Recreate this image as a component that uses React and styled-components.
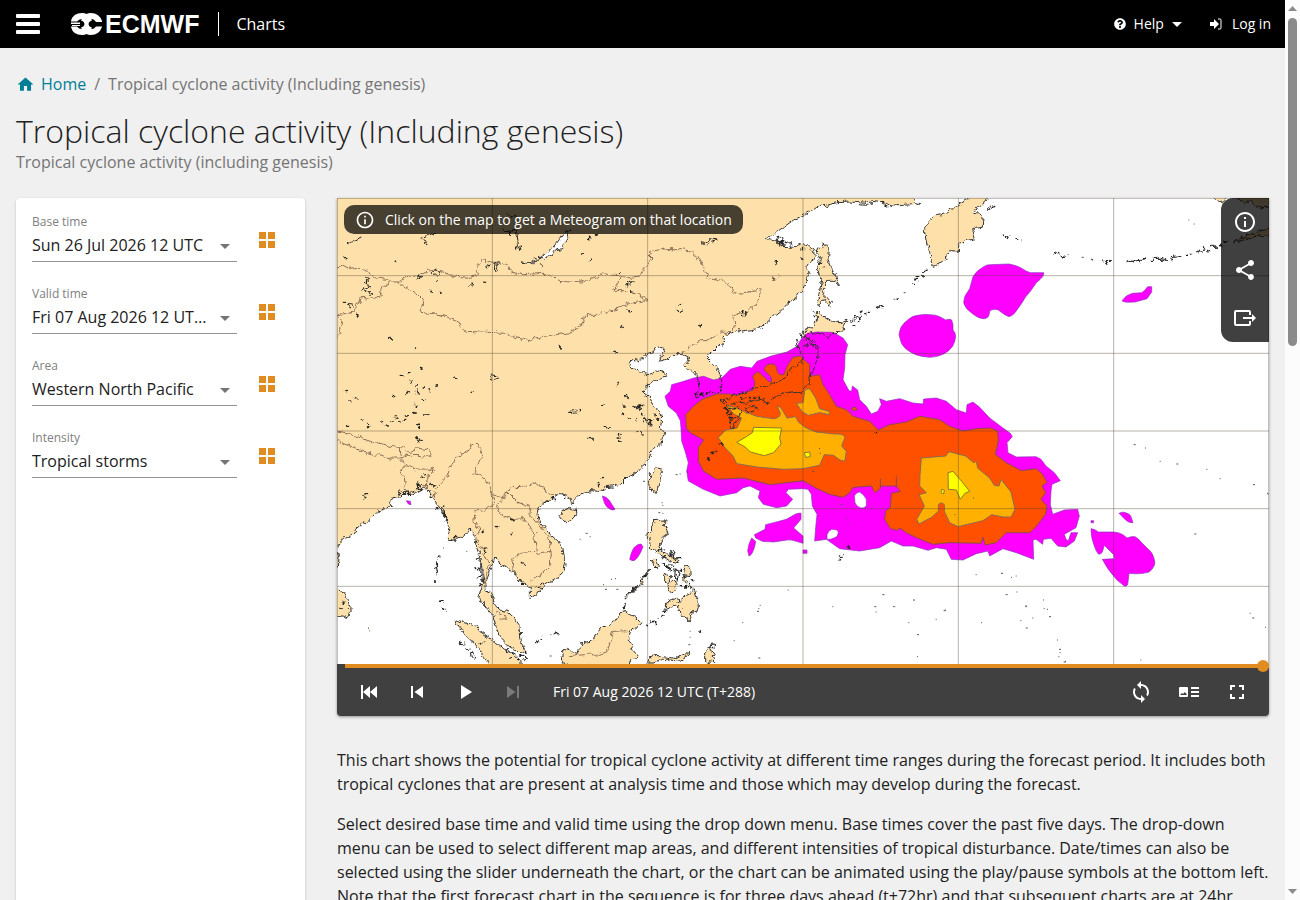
import React from "react";
import styled, { createGlobalStyle } from "styled-components";
import {
    MdHome,
    MdOutlineInfo,
    MdShare,
    MdSkipPrevious,
    MdSkipNext,
    MdPlayArrow,
    MdSync,
    MdFullscreen,
} from "react-icons/md";
import { FaQuestionCircle } from "react-icons/fa";

const GlobalStyle = createGlobalStyle`
    * {
        box-sizing: border-box;
    }
    body {
        margin: 0;
        background: #f0f0f0;
        color: #212121;
        font-family: "Open Sans", "Noto Sans", sans-serif;
        font-size: 16px;
        line-height: 24px;
    }
    button {
        border: 0;
        padding: 0;
        background: none;
        color: inherit;
        font: inherit;
        cursor: pointer;
    }
    svg {
        display: block;
    }
`;

const Shell = styled.div`
    display: grid;
    grid-template-columns: minmax(0, 1fr) 15px;
    height: 100vh;
`;

const Page = styled.div`
    overflow-y: auto;
    scrollbar-width: none;
`;

const ScrollRail = styled.div`
    display: flex;
    flex-direction: column;
    align-items: center;
    justify-content: space-between;
    padding: 6px 0;
    background: #fcfcfc;
`;

const ScrollThumb = styled.div`
    width: 9px;
    height: 328px;
    margin-top: 7px;
    margin-bottom: auto;
    border-radius: 5px;
    background: #8b8b8b;
`;

const TopBar = styled.header`
    display: flex;
    align-items: center;
    height: 48px;
    padding: 0 14px 0 16px;
    background: #000;
    color: #fff;
`;

const Burger = styled.button`
    display: grid;
    gap: 4px;
    width: 24px;
`;

const BurgerLine = styled.span`
    height: 4px;
    border-radius: 1px;
    background: #fff;
`;

const Logo = styled.a`
    display: flex;
    align-items: center;
    gap: 2px;
    margin-left: 31px;
    color: #fff;
    font: bold 25px/24px "Liberation Sans", Arial, sans-serif;
    text-decoration: none;
`;

const AppName = styled.a`
    margin-left: 19px;
    padding-left: 17px;
    border-left: 1px solid #fff;
    color: #fff;
    text-decoration: none;
`;

const TopNav = styled.nav`
    display: flex;
    gap: 28px;
    margin-left: auto;
    font-size: 14px;
`;

const NavItem = styled.button`
    display: flex;
    align-items: center;
    gap: ${(props) => (props.$wide ? "10px" : "8px")};
`;

const Content = styled.main`
    padding: 24px 16px 32px;
`;

const Breadcrumb = styled.nav`
    display: flex;
    gap: 8px;
    color: #757575;
`;

const HomeLink = styled.a`
    display: flex;
    align-items: center;
    gap: 6px;
    color: #007e96;
    text-decoration: none;
`;

const Title = styled.h1`
    margin: 15px 0 0;
    font-size: 32px;
    font-weight: 300;
    line-height: 40px;
`;

const Subtitle = styled.p`
    margin: 0;
    color: #757575;
    line-height: 22px;
`;

const Columns = styled.div`
    display: grid;
    grid-template-columns: 289px minmax(0, 1fr);
    gap: 32px;
    margin-top: 25px;
`;

const Panel = styled.form`
    padding: 16px;
    border-radius: 4px;
    background: #fff;
    box-shadow: 0 1px 3px rgba(0, 0, 0, 0.2);
`;

const Field = styled.div`
    display: flex;
    height: 72px;
`;

const FieldBody = styled.div`
    position: relative;
    width: 205px;
`;

const FieldLabel = styled.label`
    display: block;
    color: #808080;
    font-size: 12px;
    line-height: 16px;
`;

const Select = styled.select`
    width: 100%;
    height: 32px;
    padding: 0 28px 2px 0;
    border: 0;
    border-bottom: 1px solid #949494;
    border-radius: 0;
    appearance: none;
    background: transparent;
    color: #212121;
    font: inherit;
    text-overflow: ellipsis;
`;

const SelectArrow = styled.svg`
    position: absolute;
    right: 7px;
    top: 30px;
    pointer-events: none;
`;

const GridButton = styled.button`
    width: 16px;
    height: 16px;
    margin: 18px 0 0 22px;
`;

const Player = styled.section`
    overflow: hidden;
    border-radius: 0 0 4px 4px;
    background: #404040;
    color: #fff;
    box-shadow: 0 1px 3px rgba(0, 0, 0, 0.4);
`;

const MapArea = styled.div`
    position: relative;
    background: #fff;
`;

const MapSvg = styled.svg`
    width: 100%;
    height: auto;
`;

const MapHint = styled.div`
    position: absolute;
    top: 7px;
    left: 7px;
    display: flex;
    align-items: center;
    gap: 10px;
    height: 29px;
    padding: 0 11px;
    border-radius: 10px;
    background: rgba(0, 0, 0, 0.72);
    font-size: 14px;
`;

const MapTools = styled.div`
    position: absolute;
    top: 0;
    right: 0;
    border-radius: 12px 0 0 12px;
    background: rgba(0, 0, 0, 0.75);
`;

const IconButton = styled.button`
    display: flex;
    align-items: center;
    justify-content: center;
    width: 48px;
    height: 48px;
    opacity: ${(props) => (props.disabled ? 0.3 : 1)};
`;

const TimeSlider = styled.input`
    display: block;
    width: calc(100% - 8px);
    height: 4px;
    margin: 0 0 0 8px;
    appearance: none;
    background: #e08c20;
    position: relative;
    &::-webkit-slider-thumb {
        appearance: none;
        width: 12px;
        height: 12px;
        border-radius: 50%;
        background: #e08c20;
    }
`;

const Controls = styled.div`
    display: flex;
    align-items: center;
    padding: 0 8px;
`;

const TimeLabel = styled.span`
    margin: 0 auto 0 16px;
    font-size: 14px;
`;

const Description = styled.div`
    margin-top: 32px;
    p {
        margin: 0 0 16px;
    }
`;

const land = [
    // mainland Asia, clockwise from the north-west corner
    "M-30 -30H1728V0L1736 14 1752 18 1700 22 1664 24 1648 16 1610 10 1590 16 1540 12 1500 14 1450 26 1420 38 1398 52 1370 66 1336 90 1310 108 1288 120 1312 128 1332 134 1340 148 1370 150 1382 142 1398 136 1412 142 1430 158 1432 184 1418 190 1410 204 1414 234 1398 272 1380 296 1349 320 1330 340 1299 365 1276 386 1254 396 1219 402 1212 392 1196 402 1180 408 1166 412 1158 420 1160 436 1146 444 1128 462 1110 472 1112 482 1130 500 1146 522 1154 545 1150 578 1136 584 1118 584 1100 592 1078 600 1074 590 1086 570 1082 550 1086 538 1068 520 1048 512 1044 500 1058 486 1034 470 1010 470 990 484 966 490 974 472 984 458 976 446 958 448 948 462 932 466 918 482 902 486 888 484 876 494 882 508 904 512 914 526 936 530 960 518 978 524 990 534 968 540 944 550 930 568 918 582 936 596 944 616 966 638 974 660 970 690 980 700 970 736 952 752 940 768 930 792 912 808 896 826 872 838 852 858 828 864 804 866 786 880 762 878 740 888 712 902 704 920 698 898 682 892 662 890 642 902 622 912 606 930 600 946 602 966 622 990 640 1010 664 1030 678 1048 684 1100 680 1124 664 1138 630 1158 614 1176 598 1186 580 1198 580 1168 560 1154 544 1146 530 1124 520 1116 504 1104 488 1102 484 1086 468 1084 466 1104 456 1130 448 1152 446 1178 464 1186 474 1222 490 1236 510 1240 530 1258 546 1280 548 1320 556 1344 568 1366 546 1360 520 1348 490 1320 478 1290 468 1250 452 1230 434 1214 424 1208 430 1180 440 1150 436 1124 432 1080 424 1060 412 1026 404 1000 396 994 388 1008 370 1020 352 1026 332 1028 338 992 324 960 318 940 300 920 284 900 276 876 262 872 246 882 226 888 206 884 190 894 166 900 160 920 150 930 120 940 104 958 88 972 62 990 48 1012 20 1024 12 1030 0 1046H-30Z",
    // India tip, Sri Lanka
    "M-20 1050L0 1060 6 1080 4 1108 -4 1114ZM-20 1174H0L14 1180 28 1200 42 1228 42 1248 24 1258 8 1256 -20 1248Z",
    // Hainan, Taiwan
    "M668 954L676 940 696 932 718 934 720 950 704 968 684 972Z",
    "M934 854L944 826 962 810 976 814 974 844 960 870 952 886 940 868Z",
    // Luzon and the Visayas
    "M942 968L984 966 982 984 990 1000 978 1022 966 1042 970 1058 992 1068 1016 1080 1024 1094 1000 1090 976 1074 956 1062 940 1050 942 1030 930 1020 932 1010 944 1002Z",
    "M946 1086L958 1088 966 1102 962 1112 950 1100ZM980 1126L1002 1134 992 1156 980 1146ZM1040 1104L1058 1106 1060 1136 1048 1134ZM990 1162L1012 1146 1022 1160 1004 1184 992 1178ZM1036 1130L1052 1150 1048 1160 1038 1146Z",
    "M1020 1216L1048 1190 1072 1176 1082 1200 1084 1228 1076 1250 1068 1236 1058 1268 1032 1252 1028 1230 1012 1224 984 1234 986 1214 1010 1200 1022 1204Z",
    "M936 1118L918 1150 892 1176 864 1204 872 1192 904 1160Z",
    // Borneo, Sulawesi, Halmahera
    "M862 1234L874 1252 894 1258 914 1276 898 1290 878 1298 872 1320 882 1340 890 1362 906 1380 880 1386 874 1398V1420H690L676 1380 674 1362 688 1354 702 1362 726 1366 732 1334 766 1330 780 1310 792 1292 816 1284 830 1274 842 1256Z",
    "M930 1392L948 1370 980 1376 1020 1382 1044 1370 1054 1358 1054 1374 1030 1390 980 1384 946 1398H930Z",
    "M1106 1362L1118 1344 1120 1360 1136 1368 1122 1374 1136 1392 1120 1388 1116 1398 1106 1392Z",
    // Sumatra
    "M354 1268L376 1274 410 1278 428 1300 450 1316 476 1334 500 1354 524 1364 552 1390V1420H470L458 1398 436 1368 416 1340 396 1322 376 1300Z",
    // Sakhalin, Hokkaido, Kamchatka, Alaska
    "M1456 132L1468 140 1474 154 1472 178 1480 206 1494 228 1508 262 1490 250 1468 250 1458 274 1464 292 1480 310 1478 324 1466 308 1452 312 1448 326 1442 310 1448 280 1452 252 1444 220 1450 184 1440 160 1442 150 1458 152Z",
    "M1438 338L1460 354 1484 370 1508 374 1530 366 1520 384 1524 398 1490 402 1478 418 1450 406 1418 404 1408 410 1398 404 1404 394 1430 388 1438 364Z",
    "M1892 -30V0L1850 28 1828 44 1798 50 1774 72 1762 98 1768 128 1778 160 1786 208 1806 198 1830 188 1828 170 1850 158 1864 160 1866 136 1890 128 1912 124 1908 108 1904 92 1936 88 1938 58 1926 48 1910 46 1920 30 1940 20 1950 0V-30Z",
    "M2632 -30V4L2654 8 2670 0V-30ZM2698 -30V0L2712 8 2740 10 2756 30 2830 26V-30Z",
    // Alaska peninsula
    "M2690 130L2716 118 2746 108 2764 98 2830 90V112L2770 112 2740 122 2700 130Z",
].join("");

const japan =
    "M1398 412L1412 424 1436 446 1444 474 1436 504 1418 530 1416 556 1402 572M1396 486L1382 500 1362 514 1350 534 1320 554 1284 564 1250 572 1210 586 1184 596 1164 606 1178 620 1200 612 1230 616 1262 604 1282 600 1286 620 1308 606 1320 592 1346 586 1374 580 1390 586 1398 570M1168 620L1178 632 1200 626 1212 640 1204 664 1190 692 1176 686 1184 664 1170 650ZM1224 632L1240 622 1262 630 1250 640 1230 644ZM1160 600l-14 8 14 6zM1398 424l20-4 14 12-16 8zM1400 440l16 2 8-8 6 12M1378 424l10 40 8 12 2 20";

const lakes =
    "M552 192L576 194 604 184 626 166 650 146 664 128 684 102 699 94 692 120 676 150 650 164 624 178 598 188 580 198Z";

const borders =
    "M0 210L14 204 28 212 70 208 92 222 116 240 150 244 160 252 184 252 206 240 236 234 270 220 300 216 330 222 340 234 400 238 424 230 420 200 436 184 460 192 490 194 516 204 520 222 560 230 620 226 650 236 660 246 699 252 740 248 770 242 800 228 850 234 870 240 910 234 918 218 938 192 948 180 936 168 950 158 990 152 1034 152 1066 162 1084 180 1100 210 1112 238 1150 246 1180 262 1188 284 1216 288 1246 278 1272 272 1272 290 1254 320 1232 342 1206 348 1190 354 1194 384 1188 404 1150 402 1136 414 1110 428 1090 428 1060 448 1034 468" +
    "M184 252L214 274 240 288 256 304 256 322 248 342 310 350 340 360 362 372 370 386 384 400 436 402 500 406 540 420 580 428 610 416 699 404 740 378 736 360 746 352 780 352 812 340 840 334 860 320 890 314 930 308 900 288 870 278 830 278 838 260 852 238" +
    "M160 252L150 264 134 266 128 298 100 300 70 298 62 324 54 342 0 350M0 356L14 370 8 394 0 416M0 700L30 704 60 716 100 730 140 742 186 748 200 744 214 762 240 750 280 756 278 774 220 772 186 780 160 780 110 770 70 756 30 740 0 728" +
    "M186 748L192 784 206 800 188 820 202 838 206 882M206 800L230 812 284 814 288 824 270 838 268 870M290 900L300 870 330 838 350 784 372 766 396 760 408 736 426 742 436 772 426 800 410 826 436 834 454 862 466 890 500 900 506 878 540 866 568 864 590 854 620 868 628 888 660 890" +
    "M466 890L470 916 440 938 414 942 410 970 426 1000 416 1020 440 1060 456 1100 440 1160M500 900L480 920 490 950 530 964 560 962 580 986 594 1020 598 1060 562 1062 524 1080 528 1110 540 1140M506 878L540 912 580 926 576 946 606 980 636 1020 642 1060 598 1066M642 1060L644 1100 612 1130 580 1150M474 1240l24 10 8 12-18 2M699 1376l40-6 20-2 20 4 30-10 16-40 4-22 44-2M92 1290l6 10";

const magenta = [
    "M984 595L1000 580 1004 560 1040 550 1070 540 1100 535 1130 546 1154 540 1180 514 1210 505 1244 510 1260 490 1300 475 1350 462 1380 445 1392 424 1410 406 1438 402 1488 403 1518 420 1532 440 1524 470 1523 510 1518 545 1536 578 1544 580 1546 564 1562 576 1568 605 1588 625 1603 648 1622 640 1633 620 1628 602 1648 610 1688 602 1728 615 1758 618 1760 603 1798 600 1828 610 1858 635 1888 645 1890 620 1908 612 1928 628 1958 660 1998 690 2020 706 2026 716 2010 734 2013 764 2038 777 2097 776 2112 784 2127 804 2152 824 2170 848 2145 859 2142 879 2140 919 2147 949 2182 936 2222 934 2227 954 2217 989 2182 1009 2187 1024 2194 1029 2202 1004 2222 1004 2212 1029 2187 1047 2162 1044 2142 1021 2119 1024 2117 1039 2097 1024 2088 1026 2090 1084 2038 1064 1998 1052 1958 1074 1953 1059 1918 1067 1878 1086 1843 1084 1828 1054 1798 1049 1773 1057 1728 1044 1698 1044 1663 1029 1628 1049 1568 1059 1508 1052 1468 1024 1433 1029 1436 989 1440 949 1426 924 1423 889 1413 874 1398 872 1354 874 1347 884 1367 904 1349 924 1319 929 1279 919 1264 899 1269 879 1239 864 1219 869 1199 884 1149 894 1099 874 1054 849 1049 819 1054 794 1044 759 1034 729 1032 690 1030 668 1018 645 994 625Z",
    "M1908 236Q1920 216 1940 206Q1950 199 1960 200L2016 198Q2040 202 2056 212Q2070 222 2080 224L2120 224Q2124 234 2098 254L2080 280Q2066 294 2054 316L2034 344Q2026 354 2016 356Q2004 352 1992 342Q1982 332 1974 334Q1962 334 1958 340Q1956 356 1952 358Q1942 364 1938 362Q1924 360 1916 354L1900 342Q1884 330 1880 314Q1882 300 1884 294L1898 272Z",
    "M1686 410Q1688 396 1692 388Q1700 374 1712 366Q1724 354 1742 352Q1760 348 1778 350Q1796 350 1808 356L1826 366Q1838 362 1844 366L1848 380V396Q1856 404 1856 416Q1854 434 1846 446Q1836 460 1820 468Q1800 478 1778 478Q1754 476 1736 470Q1718 462 1706 452Q1694 440 1692 432Z",
    "M2355 308L2368 294 2386 286 2414 284 2424 276 2432 266 2444 266 2444 282 2430 302 2394 312Q2360 314 2355 308Z",
    "M2262 992Q2272 992 2284 1002L2328 1002Q2344 1002 2358 1010L2370 1020Q2384 1014 2394 1016Q2406 1022 2412 1032L2430 1050Q2446 1062 2450 1078Q2456 1094 2452 1102Q2446 1116 2436 1122Q2410 1130 2376 1126L2372 1160Q2366 1166 2362 1164L2340 1146Q2312 1116 2296 1084L2332 1082 2330 1070 2302 1042 2296 1062Q2292 1070 2284 1068Q2276 1058 2272 1044Q2262 1020 2262 992Z",
    "M2346 946Q2356 940 2366 944Q2380 948 2382 956L2388 974Q2376 976 2366 966Z",
    "M1252 1010L1284 994 1286 980 1310 974 1348 964 1376 948Q1390 944 1392 946L1392 964 1370 990 1398 1014 1398 1036 1378 1030Q1364 1024 1350 1026L1310 1032 1276 1030 1256 1020ZM1232 1058Q1234 1038 1244 1020L1256 1030Q1254 1050 1246 1064Q1240 1074 1236 1074Z",
    "M796 894Q808 896 816 906L834 934Q828 938 820 934Q806 926 802 914ZM878 1084Q882 1064 890 1050Q904 1036 912 1038L918 1046Q912 1064 902 1078Q894 1090 886 1088ZM208 908l12 2 2 10-8-2z",
    "M2262 968h8v6h-8zM1398 1056h12v10h-12z",
].join("");

// gaps in the low probability area
const holes =
    "M1552 894Q1556 884 1568 882Q1580 888 1588 904V924Q1580 932 1572 930Q1558 926 1554 914ZM1470 1010Q1474 998 1484 994Q1504 994 1504 1004Q1502 1014 1496 1018Q1482 1026 1470 1024Z";

const red =
    "M1048 690L1046 650 1074 620 1099 602 1139 588 1178 588 1200 592 1249 576 1254 552Q1246 536 1248 534Q1256 522 1264 522L1289 544Q1302 560 1304 546Q1304 536 1292 526Q1280 518 1282 512Q1288 498 1298 498Q1314 498 1317 505L1322 524Q1332 534 1340 530L1352 502 1368 478 1390 474 1404 488 1418 500 1418 535 1448 530 1458 560 1478 590 1498 625 1528 635 1548 655 1598 670 1624 696 1658 680 1708 672 1748 655 1808 665 1838 685 1878 699 1920 692 1962 690 1982 700 1984 729 1975 769 2008 794 2053 818 2097 812 2116 828 2130 853 2115 864 2126 884 2112 904 2130 924 2126 949 2097 986 2078 1004 2008 1004 1978 1034 1944 1041 1938 1018 1932 1036 1838 1034 1788 1039 1738 1019 1708 1004 1688 990 1683 997 1660 992 1643 964 1646 939 1660 928 1663 886 1690 880 1678 864 1632 864 1628 874 1613 884 1604 864 1548 868 1538 884 1518 898 1478 889 1438 871 1398 848 1299 860 1219 840 1139 844 1099 819 1084 789 1084 749 1100 726 1060 704ZM1630 842v26M1678 836v30M1544 630l12-2 4 8-12 2z";

const amber = [
    "M1170 622L1199 630 1219 640 1259 655 1309 662Q1330 660 1330 646L1320 624Q1332 626 1336 636L1350 660 1376 656 1384 672 1408 690 1438 702 1494 708Q1520 706 1524 718L1514 744 1528 760 1524 788Q1512 792 1490 772L1462 770 1448 802 1398 812 1340 814 1259 807 1199 797 1188 774 1164 749 1144 719 1166 696 1200 690 1214 660 1190 648Z",
    "M1378 616L1398 614 1404 574 1418 572 1436 600 1448 632 1476 640 1478 650 1448 644 1414 652 1396 642Z",
    "M1753 780L1826 774 1836 761 1886 774 1910 794 1918 790 1922 810 1958 840 1972 862 1986 864 1992 844 2022 882 2034 934 2022 957 1998 957 1964 950 1938 968 1863 986 1838 974 1822 940 1822 920Q1812 910 1804 920L1804 940 1784 958 1746 978 1739 964 1762 924 1746 890 1768 884 1748 864 1749 830Z",
].join("");

const yellow =
    "M1199 733L1228 716 1246 704 1250 688 1334 690 1328 720 1332 738 1310 764 1282 773 1240 762 1226 748ZM1402 764l16-2 2 14-14 2zM1833 824L1848 820 1874 850 1898 880 1884 886 1870 904 1858 876 1834 874ZM1814 874l8 2-2 12-8-4z";

// small lakes and islands near the coast, as x, y pairs
const specks = [
    30, 140, 26, 178, 176, 194, 246, 232, 244, 246, 404, 260, 442, 250, 452, 202, 614, 206, 286, 276, 300, 250, 310, 282,
    280, 282, 60, 348, 20, 312, 160, 420, 236, 452, 216, 522, 194, 534, 252, 510, 220, 552, 352, 536, 24, 580, 38, 604,
    54, 600, 168, 592, 208, 590, 214, 576, 238, 566, 240, 584, 260, 568, 278, 574, 298, 566, 240, 578, 404, 584, 234, 618,
    260, 608, 232, 642, 74, 664, 92, 672, 130, 676, 150, 680, 176, 658, 200, 664, 208, 656, 190, 670, 166, 674, 244, 682,
    266, 652, 30, 682, 96, 690, 670, 444, 734, 170, 762, 182, 756, 120, 780, 106, 846, 224, 870, 258, 880, 284, 874, 338,
    852, 388, 832, 458, 1030, 322, 1022, 332, 1032, 342, 1090, 380, 844, 558, 730, 634, 798, 624, 870, 592, 862, 626,
    890, 624, 896, 632, 908, 630, 914, 624, 856, 646, 874, 662, 896, 664, 914, 648, 924, 660, 932, 668, 944, 672, 952,
    654, 962, 660, 920, 674, 938, 664, 800, 690, 808, 686, 816, 692, 846, 706, 842, 718, 850, 726, 752, 724, 762, 718,
    900, 704, 916, 704, 800, 840, 786, 862, 782, 858, 1316, 188, 1318, 200, 1310, 242, 1324, 234, 1394, 180, 1396, 154,
    80, 894, 88, 892, 246, 724, 240, 720, 254, 836, 262, 832, 280, 854, 290, 866, 526, 964, 528, 968, 476, 982, 524,
    1008, 438, 996, 444, 1052, 440, 1060, 420, 1084, 416, 1108, 424, 1120, 428, 1108, 430, 1134, 420, 1136, 434, 1150,
    428, 1156, 302, 1080, 298, 1094, 294, 1108, 300, 1118, 296, 1130, 292, 1146, 298, 1100, 308, 1208, 312, 1210, 318,
    1230, 322, 1236, 430, 1334, 440, 1338, 370, 1332, 378, 1338, 392, 1350, 550, 1376, 540, 1380, 560, 1388, 570, 1376,
    530, 1370, 556, 1370, 510, 1354, 566, 1360, 520, 1382, 600, 1328, 610, 1324, 654, 1304, 660, 1308, 18, 1212, 16,
    1232, 34, 1230, 190, 886, 200, 888, 212, 884, 222, 886, 232, 880, 246, 854, 242, 862, 250, 872, 260, 866, 300, 928,
    314, 930, 318, 944, 322, 958, 344, 1024, 354, 1020, 624, 908, 634, 906, 650, 896, 672, 890, 680, 894, 610, 1158, 620,
    1154, 600, 1170, 610, 1166, 548, 1148, 556, 1156, 1110, 784, 1116, 780, 1126, 768, 1136, 758, 1150, 740, 1156, 738,
    966, 1060, 978, 1052, 998, 1070, 1010, 1078, 1020, 1084, 1028, 1078, 980, 1100, 990, 1104, 1004, 1122, 1018, 1112,
    1030, 1120, 1014, 1134, 1020, 1146, 1032, 1160, 1046, 1168, 1058, 1158, 1064, 1150, 1040, 1128, 1060, 1172, 928,
    1280, 940, 1272, 950, 1268, 962, 1260, 976, 1250, 982, 1240, 862, 1214, 860, 1230, 926, 1130, 934, 1118, 1088, 1298,
    1090, 1304, 1508, 1082, 1512, 1078, 1534, 1044, 1616, 708, 2154, 162, 2166, 168, 2178, 174, 2266, 188, 2296, 188,
    2310, 196, 2320, 186, 2372, 190, 2382, 188, 2394, 192, 2406, 188, 2420, 186, 2442, 182, 2454, 184, 2462, 180, 2474,
    182, 2504, 180, 2546, 174, 2562, 166, 2584, 162, 2592, 156, 2600, 152, 2612, 156, 2622, 148, 2632, 144, 2640, 148,
    2652, 138, 2664, 134, 2004, 110, 2012, 116, 2042, 122, 1530, 376, 1542, 364, 1556, 356, 1566, 360, 1572, 348, 1586,
    346, 1594, 342, 1550, 380, 1620, 332, 1630, 326, 1636, 324, 1680, 300, 1726, 260, 1738, 244, 1742, 240, 1756, 228,
    1760, 220, 1770, 216, 1424, 340, 1430, 352, 1456, 210, 1392, 410, 1640, 12, 1646, 20, 1076, 590, 1086, 584, 1096, 588,
    1108, 582, 1120, 584, 1166, 630, 1172, 640, 1180, 646, 1190, 632, 1184, 656, 1194, 662, 1212, 600, 1226, 602, 1240,
    596, 1252, 600, 1268, 596,
];

// atolls, drawn as single dots
const atolls = [
    1018, 830, 1030, 828, 1052, 822, 920, 850, 976, 914, 978, 922, 966, 944, 954, 974, 978, 946, 1054, 1270, 1060, 1300,
    1060, 1318, 1056, 1340, 1270, 1222, 1266, 1232, 1262, 1240, 1354, 1176, 1192, 1328, 1266, 1380, 1218, 1274, 1520,
    1070, 1530, 1048, 1534, 978, 1530, 960, 1512, 920, 1448, 752, 1450, 766, 1428, 820, 1854, 950, 1910, 900, 1730, 1206,
    1670, 1226, 1674, 1226, 1822, 1238, 1826, 1236, 1934, 1274, 1742, 1310, 1742, 1376, 1716, 1274, 1614, 1226, 1488,
    1226, 1618, 1242, 1638, 1190, 1798, 1264, 1918, 1130, 1994, 1126, 2024, 1138, 2038, 1134, 2066, 1224, 2068, 1226,
    2088, 1260, 2068, 1290, 2052, 1268, 2040, 1182, 2008, 1190, 2122, 1232, 2132, 1234, 2138, 1256, 2120, 1206, 2162,
    1326, 2168, 1354, 2170, 1364, 2166, 1376, 2182, 1392, 2186, 1390, 2412, 1386, 2392, 740, 2426, 750, 2470, 790, 2520,
    798, 2610, 814, 2650, 842, 2750, 860, 2792, 886, 2794, 888, 2748, 1260, 2740, 1246, 2786, 1288, 2574, 1008, 2556, 66,
    2572, 78, 2236, 178, 2194, 170, 344, 1024, 640, 1374, 642, 1310, 320, 1050, 20, 1016, 600, 1004, 730, 1024, 748,
    1006, 760, 1016, 800, 1160, 806, 1174, 824, 1144, 836, 1142, 840, 1174, 390, 1060, 1672, 304, 1702, 284,
];

const details =
    "M28 138L50 128 76 120M254 120L270 112 294 106M256 122L268 130 264 138 274 140M84 240l14 4-14 10 18 10-22 10 12 6 12 6-10 4M30 316l14 2 6 8-10 4zM286 224l10-8 12 4-4 10-12 2zM474 196l10 4-6 18-6 2zM496 94l14 8 10-6-4 18 10-10 6-12 8 20 4 28-8 12 12-8 4 12M512 50l8 6 16-4-4 10M458 540l6-10 14 4 6 10-14 4zM1096 134l20-8 12-2 16 2-24 8-14 10-6-6zM1320 114l20 10-8 12 18-6-8 20-14-10zM1340 136l24-2-6 18 8-8M1212 348l6-10 10 6-4 12-10 2zM864 262l18-14 4 4-18 12zM400 1364l8 2 8 14-6 4-8-8zM552 1092l12 8 6 6-14-4zM700 640l18-4 4 8-16 2zM890 622l20 4-12 6 14-10-20 6M930 664l16 2-14 10 12 2M2380 190l44-4M2440 184l50 0M2500 176l30-4M1950 30l22-12 2 6-20 12zM1000 1060l14 2-4 14zM990 1100l20 2-4 10-10 4zM1014 1118l18 10-6 14-12-6zM1118 1340l14-2 0 10-8 2zM1550 366l22-12M1620 334l16-8M186 876v16M200 880v12M222 878v12M242 850l4 24 8-16M318 940l4 24M324 950l6 20M428 1080l4 50M296 1086l4 30M440 1212l6 14";

const CycloneMap = () => (
    <MapSvg viewBox="0 0 2796 1398" role="img" aria-label="Tropical cyclone activity map">
        <filter id="coast" x="-40" y="-40" width="2876" height="1478" filterUnits="userSpaceOnUse" colorInterpolationFilters="sRGB">
            <feTurbulence type="fractalNoise" baseFrequency="0.06" numOctaves="3" seed="4" />
            <feDisplacementMap in="SourceGraphic" scale="20" xChannelSelector="R" yChannelSelector="G" />
        </filter>
        <g filter="url(#coast)">
            <path d={land} fill="#fee1aa" />
            <path d={lakes} fill="#fff" />
        </g>
        <path d={magenta} fill="#ff00ff" stroke="#8a2fc0" strokeWidth="2" strokeLinejoin="round" />
        <path d={holes} fill="#fff" stroke="#8a2fc0" strokeWidth="2" />
        <path d={red} fill="#ff5000" stroke="#8c4a50" strokeWidth="3" strokeLinejoin="round" />
        <path d={amber} fill="#ffb000" stroke="#8c6a50" strokeWidth="3" strokeLinejoin="round" />
        <path d={yellow} fill="#ffff00" stroke="#8c7a30" strokeWidth="3" />
        <g filter="url(#coast)" fill="none">
            <path d={borders} stroke="#8a6f58" strokeWidth="3" />
            <path d={land + japan + lakes} stroke="#333" strokeWidth="3" strokeLinejoin="round" />
            <path d={details} stroke="#222" strokeWidth="3" />
            <path
                d={specks
                    .map((x, i) => (i % 2 ? "" : `M${x - 3} ${specks[i + 1]}l4 ${i % 4 ? 4 : -2}l4 ${i % 3 ? -1 : 3}`))
                    .join("")}
                stroke="#222"
                strokeWidth="4"
            />
        </g>
        <path
            d={atolls.map((x, i) => (i % 2 ? "" : `M${x - 2} ${atolls[i + 1]}h${i % 6 ? 3 : 6}`)).join("")}
            stroke="#555"
            strokeWidth="3"
        />
        <path
            d="M1 0V1398M466 0V1398M932 0V1398M1398 0V1398M1864 0V1398M2330 0V1398M2795 0V1398M0 1H2796M0 233H2796M0 466H2796M0 699H2796M0 932H2796M0 1165H2796"
            stroke="#504030"
            strokeOpacity="0.4"
            strokeWidth="3"
        />
    </MapSvg>
);

const LogoMark = () => (
    <svg width="32" height="22" viewBox="0 0 32 22" aria-hidden="true">
        <path
            d="M0 8Q2 0 11 0Q14 0 15.500 1Q17 0 20 0Q28 0 31 8V14Q28 22 20 22Q17 22 15.500 21Q14 22 11 22Q2 22 0 14Z"
            fill="#fff"
        />
        <path
            d="M0 8.500H6Q8 6 10.500 6Q12 6 13 7.500Q15 8 15.500 9.500Q16 8 18 7.500Q19 6 21 6Q23 6 25 9H32V13.500H25Q23 16 21 16Q19 16 18 14.500Q16 14 15.500 12.500Q15 14 13 14.500Q12 16 10.500 16Q8 16 6 13.500H0Z"
            fill="#000"
        />
        <path d="M0 9.500H9V11H0ZM1 12H9V13H1ZM10 7.500Q13 8 13.500 11Q13 14 10 14.500L12 18 15.500 13 19 18 21 14.500Q18 14 17.500 11Q18 8 21 7.500L19 4 15.500 9 12 4Z" fill="#fff" />
    </svg>
);

const SignInIcon = () => (
    <svg width="12" height="12" viewBox="0 0 12 12" aria-hidden="true">
        <path d="M0 4H4V1L9 6 4 11V8H0Z" fill="#fff" />
        <path d="M8 1h2q1 0 1 1v8q0 1-1 1H8" fill="none" stroke="#fff" />
    </svg>
);

const ExportIcon = () => (
    <svg width="24" height="24" viewBox="0 0 24 24" fill="none" stroke="#fff" strokeWidth="2" aria-hidden="true">
        <path d="M17 9V6q0-1-1-1H3q-1 0-1 1v12q0 1 1 1h13q1 0 1-1v-3M10 12h10" />
        <path d="M19 8v8l4-4z" fill="#fff" stroke="none" />
    </svg>
);

const FirstIcon = () => (
    <svg width="24" height="24" viewBox="0 0 24 24" fill="#fff" aria-hidden="true">
        <path d="M4 5h2v14H4zM13 6v12l-7-6zM20 6v12l-7-6z" />
    </svg>
);

const LegendIcon = () => (
    <svg width="24" height="24" viewBox="0 0 24 24" fill="#fff" aria-hidden="true">
        <path
            fillRule="evenodd"
            d="M3 7h7q1 0 1 1v8q0 1-1 1H3q-1 0-1-1V8q0-1 1-1zM3 15h7l-2-3-2 2-1-1z"
        />
        <path d="M14 7h8v2h-8zM14 11h8v2h-8zM14 15h8v2h-8z" />
    </svg>
);

const TilesIcon = () => (
    <svg width="16" height="16" viewBox="0 0 16 16" fill="#e08c20" aria-hidden="true">
        <path d="M0 0h7v7H0zM9 0h7v7H9zM0 9h7v7H0zM9 9h7v7H9z" />
    </svg>
);

const fields = [
    { id: "base", label: "Base time", value: "Sun 26 Jul 2026 12 UTC" },
    { id: "valid", label: "Valid time", value: "Fri 07 Aug 2026 12 UTC (T+288)" },
    { id: "area", label: "Area", value: "Western North Pacific" },
    { id: "intensity", label: "Intensity", value: "Tropical storms" },
];

const Header = () => (
    <TopBar>
        <Burger aria-label="Menu">
            <BurgerLine />
            <BurgerLine />
            <BurgerLine />
        </Burger>
        <Logo href="#">
            <LogoMark />
            ECMWF
        </Logo>
        <AppName href="#">Charts</AppName>
        <TopNav>
            <NavItem>
                <FaQuestionCircle size={12} />
                Help
                <svg width="10" height="5" viewBox="0 0 10 5" fill="#fff">
                    <path d="M0 0h10L5 5z" />
                </svg>
            </NavItem>
            <NavItem $wide>
                <SignInIcon />
                Log in
            </NavItem>
        </TopNav>
    </TopBar>
);

const App = () => (
    <Shell>
        <GlobalStyle />
        <Page>
            <Header />
            <Content>
                <Breadcrumb>
                    <HomeLink href="#">
                        <MdHome size={19} />
                        Home
                    </HomeLink>
                    <span>/</span>
                    <span>Tropical cyclone activity (Including genesis)</span>
                </Breadcrumb>
                <Title>Tropical cyclone activity (Including genesis)</Title>
                <Subtitle>Tropical cyclone activity (including genesis)</Subtitle>
                <Columns>
                    <Panel>
                        {fields.map((field) => (
                            <Field key={field.id}>
                                <FieldBody>
                                    <FieldLabel htmlFor={field.id}>{field.label}</FieldLabel>
                                    <Select id={field.id}>
                                        <option>{field.value}</option>
                                    </Select>
                                    <SelectArrow width="10" height="5" viewBox="0 0 10 5" fill="#757575">
                                        <path d="M0 0h10L5 5z" />
                                    </SelectArrow>
                                </FieldBody>
                                <GridButton type="button" aria-label={`Show all: ${field.label}`}>
                                    <TilesIcon />
                                </GridButton>
                            </Field>
                        ))}
                    </Panel>
                    <div>
                        <Player>
                            <MapArea>
                                <CycloneMap />
                                <MapHint>
                                    <MdOutlineInfo size={20} />
                                    Click on the map to get a Meteogram on that location
                                </MapHint>
                                <MapTools>
                                    <IconButton aria-label="Information">
                                        <MdOutlineInfo size={24} />
                                    </IconButton>
                                    <IconButton aria-label="Share">
                                        <MdShare size={24} />
                                    </IconButton>
                                    <IconButton aria-label="Export">
                                        <ExportIcon />
                                    </IconButton>
                                </MapTools>
                            </MapArea>
                            <TimeSlider type="range" min="72" max="288" step="24" defaultValue="288" aria-label="Valid time" />
                            <Controls>
                                <IconButton aria-label="First">
                                    <FirstIcon />
                                </IconButton>
                                <IconButton aria-label="Previous">
                                    <MdSkipPrevious size={24} />
                                </IconButton>
                                <IconButton aria-label="Play">
                                    <MdPlayArrow size={24} />
                                </IconButton>
                                <IconButton aria-label="Next" disabled>
                                    <MdSkipNext size={24} />
                                </IconButton>
                                <TimeLabel>Fri 07 Aug 2026 12 UTC (T+288)</TimeLabel>
                                <IconButton aria-label="Loop">
                                    <MdSync size={24} />
                                </IconButton>
                                <IconButton aria-label="Legend">
                                    <LegendIcon />
                                </IconButton>
                                <IconButton aria-label="Full screen">
                                    <MdFullscreen size={24} />
                                </IconButton>
                            </Controls>
                        </Player>
                        <Description>
                            <p>
                                This chart shows the potential for tropical cyclone activity at different time ranges
                                during the forecast period. It includes both tropical cyclones that are present at
                                analysis time and those which may develop during the forecast.
                            </p>
                            <p>
                                Select desired base time and valid time using the drop down menu. Base times cover the
                                past five days. The drop-down menu can be used to select different map areas, and
                                different intensities of tropical disturbance. Date/times can also be selected using the
                                slider underneath the chart, or the chart can be animated using the play/pause symbols
                                at the bottom left. Note that the first forecast chart in the sequence is for three days
                                ahead (t+72hr) and that subsequent charts are at 24hr
                            </p>
                        </Description>
                    </div>
                </Columns>
            </Content>
        </Page>
        <ScrollRail aria-hidden="true">
            <svg width="9" height="5" viewBox="0 0 9 5" fill="#8b8b8b">
                <path d="M0 5L4.500 0 9 5z" />
            </svg>
            <ScrollThumb />
            <svg width="9" height="5" viewBox="0 0 9 5" fill="#8b8b8b">
                <path d="M0 0h9L4.500 5z" />
            </svg>
        </ScrollRail>
    </Shell>
);

export default App;
